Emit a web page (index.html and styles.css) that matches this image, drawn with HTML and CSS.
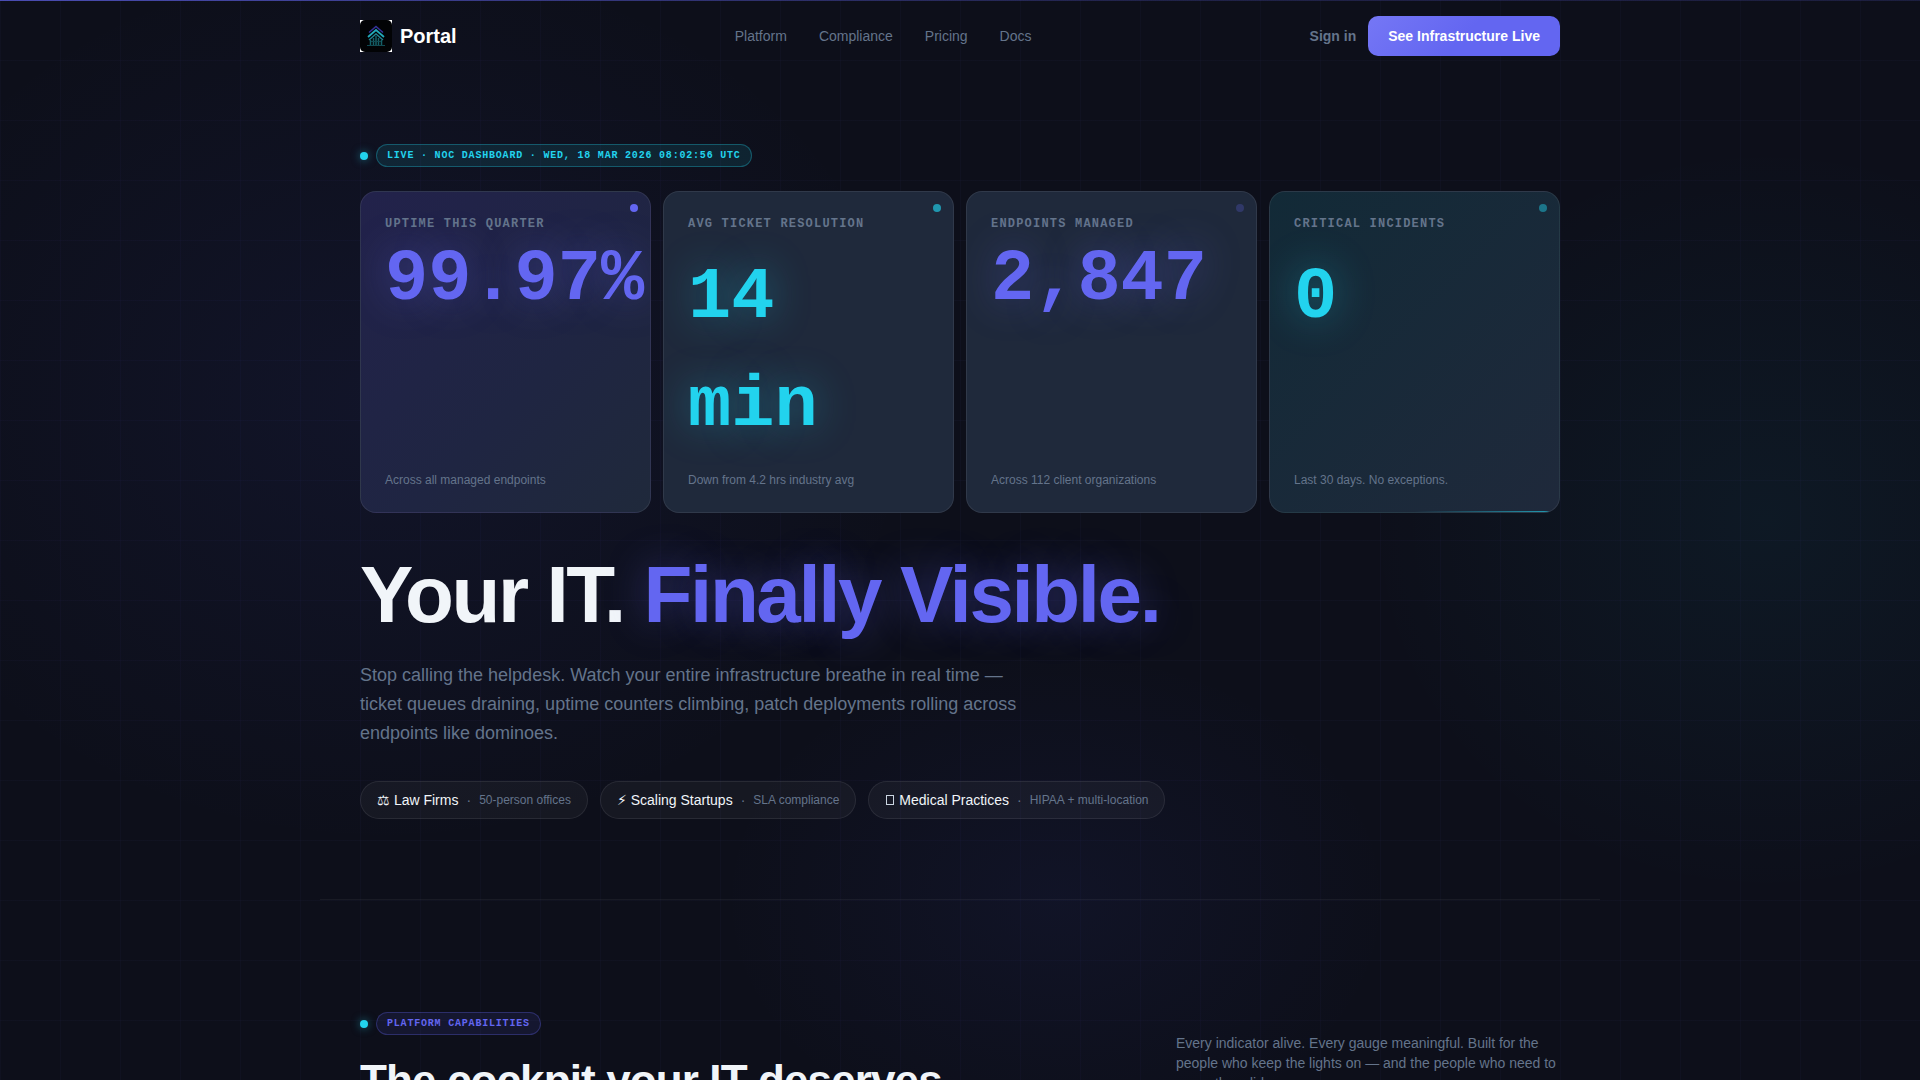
FILE: index.html
```html
<!DOCTYPE html>
<html lang="en">
<head>
<meta charset="UTF-8">
<meta name="viewport" content="width=device-width, initial-scale=1.0">
<title>Portal</title>
<link rel="stylesheet" href="styles.css">
</head>
<body>
<div class="scroll-progress"></div>

<header class="nav container">
  <a href="#" class="brand">
    <svg class="brand-logo" viewBox="0 0 32 32" aria-hidden="true">
      <rect width="32" height="32" fill="#fff"/>
      <rect width="32" height="32" rx="5" fill="#020305"/>
      <g fill="none" stroke-width="1.5">
        <path d="M9 12.500 16 6.500l7 6" stroke="#35349a"/>
        <path d="M8 17l8-7 8 7" stroke="#22a8b8" stroke-width="1.800"/>
        <path d="M9 20l7-6 7 6" stroke="#20808f"/>
        <path d="M10.500 20v6M13.500 18v8M16 16v10M18.500 18v8M21.500 20v6" stroke="#146068"/>
        <path d="M7 25.500h18M11 21.500h10" stroke="#114a52" stroke-width="1"/>
      </g>
    </svg>
    <span>Portal</span>
  </a>
  <nav class="nav-links">
    <a href="#platform">Platform</a>
    <a href="#compliance">Compliance</a>
    <a href="#pricing">Pricing</a>
    <a href="#docs">Docs</a>
  </nav>
  <div class="nav-actions">
    <a href="#signin" class="sign-in">Sign in</a>
    <button type="button" class="btn-primary">See Infrastructure Live</button>
  </div>
</header>

<main>
  <section class="hero container">
    <div class="eyebrow">
      <span class="dot"></span>
      <span class="pill pill-cyan">LIVE · NOC DASHBOARD · WED, 18 MAR 2026 08:02:56 UTC</span>
    </div>

    <div class="metrics">
      <article class="card card-indigo">
        <span class="card-dot"></span>
        <p class="card-label">UPTIME THIS QUARTER</p>
        <p class="card-value">99.97%</p>
        <p class="card-note">Across all managed endpoints</p>
      </article>
      <article class="card">
        <span class="card-dot cyan dim"></span>
        <p class="card-label">AVG TICKET RESOLUTION</p>
        <p class="card-value cyan">14 min</p>
        <p class="card-note">Down from 4.2 hrs industry avg</p>
      </article>
      <article class="card">
        <span class="card-dot faint"></span>
        <p class="card-label">ENDPOINTS MANAGED</p>
        <p class="card-value">2,847</p>
        <p class="card-note">Across 112 client organizations</p>
      </article>
      <article class="card card-cyan">
        <span class="card-dot cyan half"></span>
        <p class="card-label">CRITICAL INCIDENTS</p>
        <p class="card-value cyan">0</p>
        <p class="card-note">Last 30 days. No exceptions.</p>
      </article>
    </div>

    <h1>Your IT. <span class="accent">Finally Visible.</span></h1>
    <p class="lead">Stop calling the helpdesk. Watch your entire infrastructure breathe in real time — ticket queues draining, uptime counters climbing, patch deployments rolling across endpoints like dominoes.</p>

    <ul class="chips">
      <li class="chip"><span>⚖ Law Firms</span><span class="chip-sep">·</span><span class="chip-note">50-person offices</span></li>
      <li class="chip"><span><span class="chip-bolt">⚡&#xFE0E;</span> Scaling Startups</span><span class="chip-sep">·</span><span class="chip-note">SLA compliance</span></li>
      <li class="chip"><span><span class="chip-box"></span> Medical Practices</span><span class="chip-sep">·</span><span class="chip-note">HIPAA + multi-location</span></li>
    </ul>
  </section>

  <hr class="divider">

  <section class="platform container" id="platform">
    <div>
      <div class="eyebrow">
        <span class="dot"></span>
        <span class="pill">PLATFORM CAPABILITIES</span>
      </div>
      <h2>The cockpit your IT deserves</h2>
    </div>
    <p class="platform-note">Every indicator alive. Every gauge meaningful. Built for the people who keep the lights on — and the people who need to prove they did.</p>
  </section>
</main>
</body>
</html>
```

FILE: styles.css
```css
:root {
  --bg: #0d0f1a;
  --text: #f1f5f9;
  --muted: #64748b;
  --indigo: #6366f1;
  --cyan: #22d3ee;
  --sans: "Liberation Sans", Arial, sans-serif;
  --mono: "Liberation Mono", "Courier New", monospace;
}

* {
  box-sizing: border-box;
  margin: 0;
  padding: 0;
}

html {
  background: var(--bg);
}

body {
  min-height: 100vh;
  font-family: var(--sans);
  font-size: 14px;
  line-height: 20px;
  color: var(--text);
  background:
    linear-gradient(rgba(99, 102, 241, 0.03) 1px, transparent 1px) 0 0 / 60px 60px,
    linear-gradient(90deg, rgba(99, 102, 241, 0.03) 1px, transparent 1px) 0 0 / 60px 60px,
    radial-gradient(ellipse 768px 640px at 20% 400px, rgba(79, 92, 241, 0.07), transparent 70%),
    radial-gradient(ellipse 576px 540px at 92% 520px, rgba(34, 211, 238, 0.05), transparent 70%),
    radial-gradient(ellipse 480px 360px at 55% 900px, rgba(79, 92, 241, 0.06), transparent 70%);
}

a {
  color: inherit;
  text-decoration: none;
}

.container {
  max-width: 1280px;
  margin: 0 auto;
  padding: 0 40px;
}

/* thin progress line along the top edge */
.scroll-progress {
  position: fixed;
  top: 0;
  left: 0;
  right: 0;
  height: 1px;
  background: linear-gradient(90deg, rgba(99, 102, 241, 0.7), rgba(99, 102, 241, 0.2) 60%, rgba(99, 102, 241, 0.15));
}

/* Nav */
.nav {
  display: flex;
  align-items: center;
  justify-content: space-between;
  height: 72px;
}

.brand {
  display: flex;
  align-items: center;
  gap: 8px;
  font-size: 20px;
  font-weight: 700;
  color: #fff;
}

.brand-logo {
  width: 32px;
  height: 32px;
}

.nav-links {
  display: flex;
  gap: 32px;
  color: var(--muted);
}

.nav-actions {
  display: flex;
  align-items: center;
  gap: 12px;
}

.sign-in {
  font-weight: 700;
  color: var(--muted);
}

.btn-primary {
  height: 40px;
  padding: 0 20px;
  border: none;
  border-radius: 10px;
  background: linear-gradient(135deg, #7577f5, #6366f1 50%);
  color: #fff;
  font-family: inherit;
  font-size: 14px;
  font-weight: 700;
  cursor: pointer;
}

/* Hero */
.hero {
  padding-top: 72px;
  padding-bottom: 80px;
}

.eyebrow {
  display: flex;
  align-items: center;
  gap: 8px;
}

.dot {
  width: 8px;
  height: 8px;
  border-radius: 50%;
  background: var(--cyan);
  box-shadow: 0 0 8px rgba(34, 211, 238, 0.5);
}

.pill {
  padding: 3px 10px;
  border: 1px solid rgba(99, 102, 241, 0.3);
  border-radius: 12px;
  background: rgba(99, 102, 241, 0.1);
  font-family: var(--mono);
  font-size: 10px;
  font-weight: 700;
  line-height: 15px;
  letter-spacing: 0.08em;
  color: var(--indigo);
}

.pill-cyan {
  border-color: rgba(34, 211, 238, 0.3);
  background: rgba(34, 211, 238, 0.1);
  color: var(--cyan);
}

.metrics {
  display: grid;
  grid-template-columns: repeat(4, minmax(0, 1fr));
  gap: 12px;
  margin-top: 24px;
}

.card {
  position: relative;
  display: flex;
  flex-direction: column;
  padding: 24px;
  border: 1px solid rgba(255, 255, 255, 0.08);
  border-radius: 16px;
  background: #1f293b;
  overflow: hidden;
}

.card-indigo {
  background: linear-gradient(135deg, #22224b, #1f2542 60%, #1f293b);
}

.card-cyan {
  background: linear-gradient(135deg, #122a37, #1f293b);
}

.card-cyan::after {
  content: "";
  position: absolute;
  left: 0;
  right: 0;
  bottom: 0;
  height: 1px;
  background: linear-gradient(90deg, transparent 50%, var(--cyan));
  opacity: 0.7;
}

.card-dot {
  position: absolute;
  top: 12px;
  right: 12px;
  width: 8px;
  height: 8px;
  border-radius: 50%;
  background: var(--indigo);
}

.card-dot.cyan {
  background: var(--cyan);
}

.card-dot.dim {
  opacity: 0.65;
}

.card-dot.half {
  opacity: 0.45;
}

.card-dot.faint {
  opacity: 0.25;
}

.card-label {
  font-family: var(--mono);
  font-size: 12px;
  font-weight: 700;
  line-height: 16px;
  letter-spacing: 0.1em;
  color: var(--muted);
}

.card-value {
  margin: 12px 0;
  font-family: var(--mono);
  font-size: 72px;
  font-weight: 700;
  line-height: 72px;
  color: var(--indigo);
  text-shadow: 0 0 40px rgba(99, 102, 241, 0.4);
}

.card-value.cyan {
  line-height: 108px;
  color: var(--cyan);
  text-shadow: 0 0 40px rgba(34, 211, 238, 0.4);
}

.card-note {
  margin-top: auto;
  font-size: 12px;
  line-height: 16px;
  color: var(--muted);
}

h1 {
  margin-top: 40px;
  font-size: 80px;
  font-weight: 700;
  line-height: 84px;
  letter-spacing: -0.03em;
}

.accent {
  color: var(--indigo);
  text-shadow: 0 0 40px rgba(99, 102, 241, 0.4);
}

.lead {
  max-width: 680px;
  margin-top: 24px;
  font-size: 18px;
  line-height: 29px;
  color: var(--muted);
}

.chips {
  display: flex;
  flex-wrap: wrap;
  gap: 12px;
  margin-top: 33px;
  list-style: none;
}

.chip {
  display: flex;
  align-items: center;
  gap: 8px;
  height: 38px;
  padding: 0 16px;
  border: 1px solid rgba(255, 255, 255, 0.08);
  border-radius: 19px;
  background: rgba(255, 255, 255, 0.04);
}

.chip-bolt {
  font-family: "DejaVu Sans", sans-serif;
}

.chip-box {
  display: inline-block;
  width: 8px;
  height: 10px;
  margin: 0 1px;
  border: 1px solid #cbd5e1;
}

.chip-sep {
  color: var(--muted);
}

.chip-note {
  font-size: 12px;
  color: var(--muted);
}

.divider {
  max-width: 1280px;
  height: 1px;
  margin: 0 auto;
  border: none;
  background: rgba(255, 255, 255, 0.05);
}

/* Platform */
.platform {
  display: flex;
  align-items: flex-end;
  justify-content: space-between;
  padding-top: 112px;
  padding-bottom: 80px;
}

h2 {
  margin-top: 22px;
  font-size: 44px;
  font-weight: 700;
  line-height: 48px;
  letter-spacing: -0.02em;
}

.platform-note {
  max-width: 384px;
  margin-bottom: 12px;
  color: var(--muted);
}
```
